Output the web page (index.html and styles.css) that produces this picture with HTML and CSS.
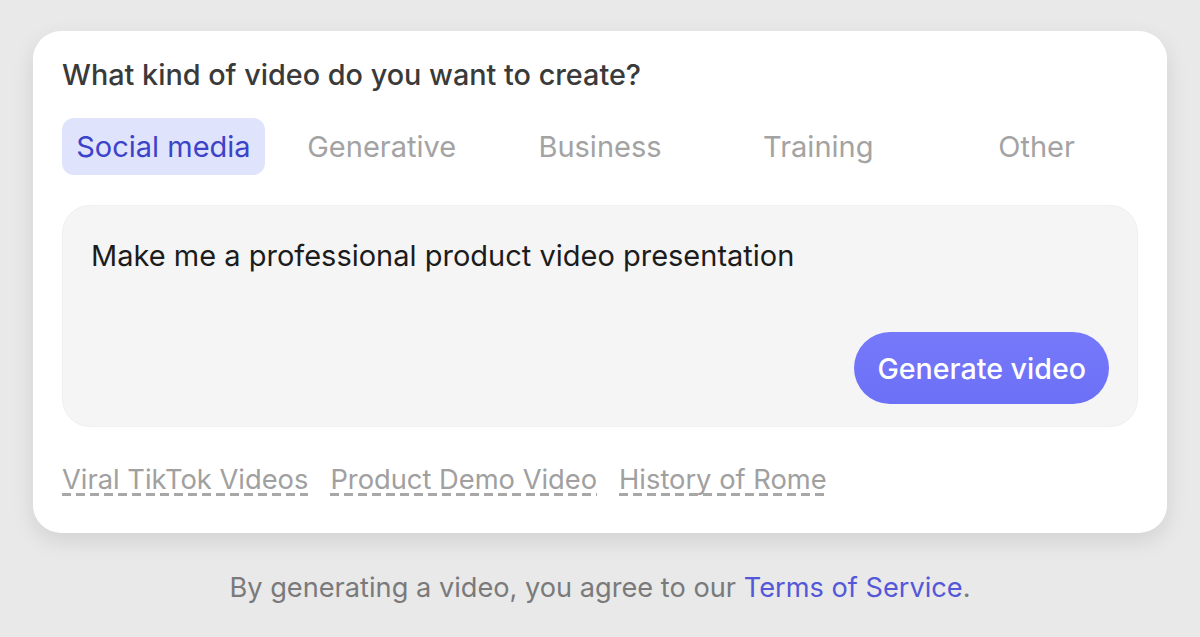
FILE: index.html
```html
<!DOCTYPE html>
<html>
<head>
<meta charset="utf-8">
<link rel="stylesheet" href="styles.css">
</head>
<body>
<div class="page">
  <div class="card">
    <h1 class="title">What kind of video do you want to create?</h1>
    <div class="tabs">
      <div class="tab active">Social media</div>
      <div class="tab">Generative</div>
      <div class="tab">Business</div>
      <div class="tab">Training</div>
      <div class="tab">Other</div>
    </div>
    <div class="prompt">
      <div class="prompt-text">Make me a professional product video presentation</div>
      <div class="actions">
        <button class="generate">Generate video</button>
      </div>
    </div>
    <div class="suggestions">
      <span class="sugg">Viral TikTok Videos</span>
      <span class="sugg">Product Demo Video</span>
      <span class="sugg">History of Rome</span>
    </div>
  </div>
  <p class="terms">By generating a video, you agree to our <a class="link">Terms of Service</a>.</p>
</div>
</body>
</html>
```
FILE: styles.css
```css
* { box-sizing: border-box; }
html, body { margin: 0; padding: 0; }
body {
  background: #e9e9e9;
  font-family: Inter, "Noto Sans", sans-serif;
  width: 1200px;
  height: 637px;
  overflow: hidden;
}
.page {
  padding: 31px 33px 0;
}
.card {
  background: #fff;
  border-radius: 28px;
  box-shadow: 0 8px 22px rgba(0,0,0,0.10);
  padding: 28px 29px 32px;
  height: 502px;
}
.title {
  margin: 0;
  font-size: 28.8px;
  font-weight: 500;
  color: #3a3a3a;
  line-height: 32px;
}
.tabs {
  display: grid;
  grid-template-columns: repeat(5, 1fr);
  column-gap: 15.5px;
  margin-top: 27px;
}
.tab {
  height: 57px;
  display: flex;
  align-items: center;
  justify-content: center;
  font-size: 29px;
  color: #a3a3a3;
  border-radius: 12px;
}
.tab.active {
  background: #dfe3fc;
  color: #3d43c9;
}
.prompt {
  margin-top: 30px;
  background: #f5f5f5;
  border: 1px solid #f0f0f0;
  border-radius: 28px;
  height: 222px;
  padding: 31px 28px 22px 28px;
  display: flex;
  flex-direction: column;
}
.prompt-text {
  font-size: 29px;
  color: #1c1c1c;
  line-height: 38px;
}
.actions {
  margin-top: auto;
  display: flex;
  justify-content: flex-end;
}
.generate {
  border: 0;
  height: 72px;
  padding: 0 23px;
  border-radius: 36px;
  background: linear-gradient(180deg, #7679fa 0%, #6c70f6 100%);
  color: #fff;
  font-family: Inter, sans-serif;
  font-size: 28.6px;
  font-weight: 500;
}
.suggestions {
  margin-top: 38px;
  display: flex;
  gap: 22px;
}
.sugg {
  font-size: 27.3px;
  color: #a0a0a0;
  line-height: 30px;
  padding-bottom: 1px;
  background-image: repeating-linear-gradient(90deg, #a8a8a8 0 9px, transparent 9px 14px);
  background-size: 100% 3px;
  background-position: left bottom;
  background-repeat: no-repeat;
}
.terms {
  margin: 38px 0 0;
  text-align: center;
  font-size: 27.2px;
  color: #7a7a7a;
}
.link {
  color: #5457d8;
}
```
